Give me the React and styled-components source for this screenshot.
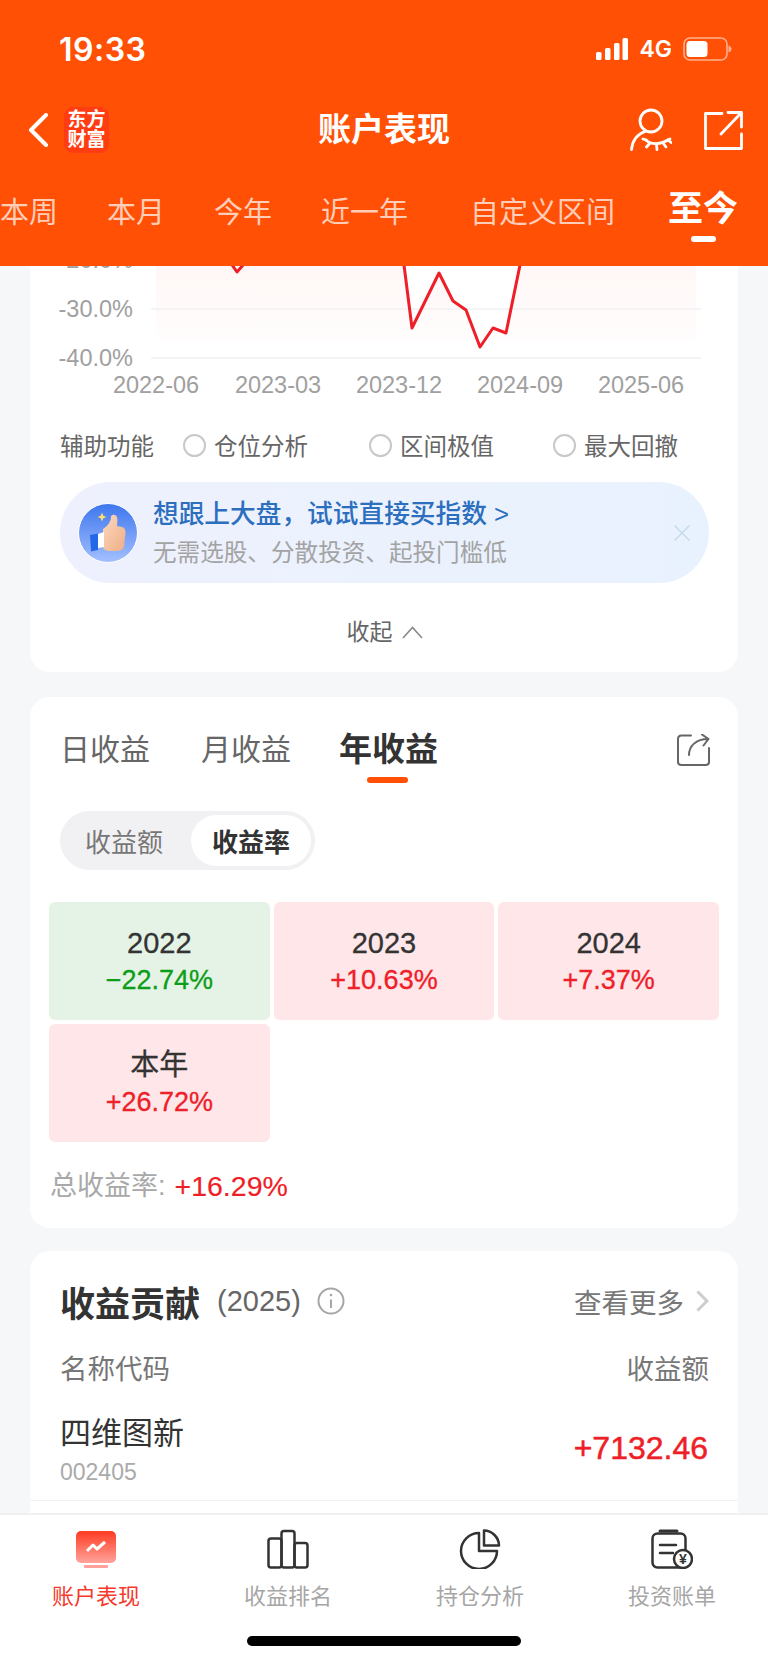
import React from 'react';
import styled, { createGlobalStyle } from 'styled-components';

const FONT = '"Liberation Sans", "Noto Sans CJK SC", sans-serif';

const GlobalStyle = createGlobalStyle`
  html, body {
    margin: 0;
    padding: 0;
    background: #f6f7f9;
    font-family: ${FONT};
  }
  * { box-sizing: border-box; }
`;

const Page = styled.div`
  width: 768px;
  height: 1663px;
  display: flex;
  flex-direction: column;
  overflow: hidden;
  background: #f6f7f9;
`;

/* ---------- orange header ---------- */

const Header = styled.header`
  flex: none;
  height: 266px;
  background: #ff5005;
  color: #fff;
  display: flex;
  flex-direction: column;
`;

const StatusBar = styled.div`
  height: 98px;
  padding: 0 36px 0 59px;
  display: flex;
  align-items: center;
  justify-content: space-between;
`;

const Clock = styled.span`
  font-family: Inter, ${FONT};
  font-weight: 600;
  font-size: 32px;
  letter-spacing: .5px;
`;

const StatusRight = styled.div`
  display: flex;
  align-items: center;
`;

const NetworkLabel = styled.span`
  font-family: Inter, ${FONT};
  font-weight: 600;
  font-size: 23px;
  margin: 0 11px 0 11px;
`;

const NavBar = styled.div`
  height: 64px;
  padding: 0 25px 0 28px;
  display: flex;
  align-items: center;
  justify-content: space-between;
  position: relative;
`;

const NavLeft = styled.div`
  display: flex;
  align-items: center;
  gap: 16px;
`;

const BrandBadge = styled.div`
  width: 45px;
  height: 46px;
  border-radius: 9px;
  background: #ff3c12;
  display: flex;
  align-items: center;
  justify-content: center;
  text-align: center;
  font-size: 19px;
  line-height: 20px;
  font-weight: 700;
`;

const NavTitle = styled.h1`
  position: absolute;
  left: 0;
  right: 0;
  top: 0;
  margin: 0;
  line-height: 64px;
  font-size: 33px;
  font-weight: 700;
  text-align: center;
  pointer-events: none;
`;

const NavRight = styled.div`
  display: flex;
  align-items: center;
  gap: 32px;
`;

const PeriodTabs = styled.nav`
  flex: 1;
  display: flex;
  align-items: flex-start;
  gap: 49px;
  white-space: nowrap;
`;

const PeriodTab = styled.span`
  position: relative;
  margin-left: ${p => p.$offset || 0}px;
  font-size: ${p => (p.$active ? 35 : 29)}px;
  font-weight: ${p => (p.$active ? 700 : 400)};
  line-height: 40px;
  margin-top: ${p => (p.$active ? 27 : 31)}px;
  color: ${p => (p.$active ? '#fff' : 'rgba(255,255,255,.72)')};

  ${p => p.$active && `
    &::after {
      content: '';
      position: absolute;
      left: 23px;
      bottom: -13px;
      width: 25px;
      height: 6px;
      border-radius: 3px;
      background: #fff;
    }
  `}
`;

/* ---------- scrolling body ---------- */

const Body = styled.main`
  flex: 1;
  min-height: 0;
  overflow: hidden;
  padding: 0 30px;
  display: flex;
  flex-direction: column;
  gap: 25px;
`;

const Card = styled.section`
  flex: none;
  background: #fff;
  border-radius: ${p => (p.$openTop ? '0 0 20px 20px' : '20px')};
  padding: ${p => p.$pad || '0 29px 0 30px'};
  margin-top: ${p => p.$shift || 0}px;
`;

const ChartSvg = styled.svg`
  display: block;
  margin: 0 -29px 0 -30px;
`;

const AssistRow = styled.div`
  margin-top: 30px;
  height: 30px;
  display: flex;
  align-items: center;
  font-size: 23.5px;
  color: #666;
`;

const AssistOption = styled.label`
  display: flex;
  align-items: center;
  gap: 8px;
  margin-left: ${p => p.$gap}px;
`;

const Radio = styled.span`
  width: 23px;
  height: 23px;
  border-radius: 50%;
  border: 2px solid #c8c8c8;
`;

const Banner = styled.div`
  margin-top: 22px;
  height: 101px;
  border-radius: 51px;
  padding: 0 19px 0 18px;
  background: linear-gradient(90deg, #eef1fd 0%, #e8f2fe 100%);
  display: flex;
  align-items: center;
  gap: 15px;
`;

const BannerText = styled.div`
  flex: 1;
  display: flex;
  flex-direction: column;
  gap: 4px;
`;

const BannerTitle = styled.div`
  font-size: 25.7px;
  line-height: 36px;
  font-weight: 500;
  color: #2c6fbf;
`;

const BannerSub = styled.div`
  font-size: 23.6px;
  line-height: 34px;
  color: #a3a3a3;
`;

const CollapseRow = styled.div`
  margin-top: 34px;
  padding-bottom: 25px;
  display: flex;
  justify-content: center;
  align-items: center;
  gap: 9px;
  font-size: 23px;
  line-height: 30px;
  color: #666;
`;

const EarningTabs = styled.div`
  height: 44px;
  display: flex;
  align-items: center;
  gap: 51px;
`;

const EarningTab = styled.span`
  position: relative;
  font-size: ${p => (p.$active ? 33 : 30)}px;
  line-height: 44px;
  font-weight: ${p => (p.$active ? 700 : 400)};
  color: ${p => (p.$active ? '#333' : '#666')};
  margin-left: ${p => (p.$active ? -3 : 0)}px;

  ${p => p.$active && `
    &::after {
      content: '';
      position: absolute;
      left: 28px;
      bottom: -11px;
      width: 41px;
      height: 6px;
      border-radius: 3px;
      background: #ff5005;
    }
  `}
`;

const ShareButton = styled.svg`
  margin-left: auto;
  margin-right: -1px;
`;

const Segment = styled.div`
  margin-top: 39px;
  width: 255px;
  height: 59px;
  padding: 4px;
  border-radius: 30px;
  background: #f1f1f4;
  display: flex;
`;

const SegmentItem = styled.div`
  width: ${p => (p.$active ? 120 : 127)}px;
  padding-right: ${p => (p.$active ? 0 : 7)}px;
  border-radius: 26px;
  background: ${p => (p.$active ? '#fff' : 'transparent')};
  display: flex;
  align-items: center;
  justify-content: center;
  font-size: 26px;
  font-weight: ${p => (p.$active ? 700 : 400)};
  color: ${p => (p.$active ? '#333' : '#777')};
`;

const YearGrid = styled.div`
  margin: 32px -10px 0 -11px;
  display: grid;
  grid-template-columns: repeat(3, 1fr);
  gap: 4px;
`;

const YearCell = styled.div`
  height: 118px;
  border-radius: 6px;
  background: ${p => (p.$down ? '#e5f3e6' : '#ffe6e8')};
  display: flex;
  flex-direction: column;
  align-items: center;
  justify-content: center;
  gap: 4px;
`;

const YearLabel = styled.div`
  font-size: 29px;
  line-height: 34px;
  color: #333;
  -webkit-text-stroke: .3px #333;
`;

const YearValue = styled.div`
  font-size: 27px;
  line-height: 32px;
  color: ${p => (p.$down ? '#0c9e18' : '#ee2029')};
  -webkit-text-stroke: .3px ${p => (p.$down ? '#0c9e18' : '#ee2029')};
`;

const TotalRow = styled.div`
  margin: 26px 0 0 -10px;
  padding-bottom: 24px;
  line-height: 36px;
  font-size: 27px;
  color: #a8a8a8;
  display: flex;
  gap: 9px;
`;

const RedValue = styled.span`
  font-size: ${p => p.$size || 28.5}px;
  color: #ee1f28;
  -webkit-text-stroke: ${p => (p.$strong ? '.5px' : '.2px')} #ee1f28;
  margin: ${p => (p.$strong ? '0 1px 4px 0' : '0')};
`;

const ContributionHead = styled.div`
  height: 44px;
  display: flex;
  align-items: center;
`;

const ContributionTitle = styled.h2`
  margin: 0;
  font-size: 35px;
  font-weight: 700;
  color: #333;
`;

const ContributionYear = styled.span`
  margin: 0 16px 0 17px;
  font-size: 29px;
  color: #666;
`;

const MoreLink = styled.span`
  margin-left: auto;
  display: flex;
  align-items: center;
  gap: 12px;
  font-size: 27.5px;
  color: #777;
`;

const ColumnHead = styled.div`
  margin-top: 30px;
  display: flex;
  justify-content: space-between;
  line-height: 34px;
  font-size: 27.5px;
  color: #777;
`;

const StockRow = styled.div`
  margin: 27px -29px 0 -30px;
  padding: 0 29px 13px 30px;
  display: flex;
  justify-content: space-between;
  align-items: center;
  border-bottom: 1px solid #f2f2f2;
`;

const StockName = styled.div`
  font-size: 31px;
  line-height: 40px;
  color: #333;
`;

const StockCode = styled.div`
  margin-top: 3px;
  font-size: 23px;
  line-height: 30px;
  color: #aaa;
`;

/* ---------- bottom tab bar ---------- */

const TabBar = styled.footer`
  flex: none;
  position: relative;
  height: 150px;
  background: #fff;
  border-top: 2px solid #f0f0f2;
`;

const TabItems = styled.div`
  padding-top: 14px;
  display: grid;
  grid-template-columns: repeat(4, 192px);
`;

const TabItem = styled.div`
  display: flex;
  flex-direction: column;
  align-items: center;
  font-size: 22px;
  line-height: 30px;
  color: ${p => (p.$active ? '#f5392b' : '#a6a6a6')};
`;

const TabIcon = styled.svg`
  display: block;
  margin-bottom: 13px;
`;

const HomeIndicator = styled.div`
  position: absolute;
  left: 247px;
  bottom: 17px;
  width: 274px;
  height: 10px;
  border-radius: 5px;
  background: #000;
`;

/* ---------- drawings ---------- */

const SignalIcon = () => (
  <svg width="32" height="22" viewBox="0 0 32 22" fill="#fff">
    <rect x="0" y="14" width="5.5" height="8" rx="1.5" />
    <rect x="9" y="10" width="5.5" height="12" rx="1.5" />
    <rect x="18" y="5" width="5.5" height="17" rx="1.5" />
    <rect x="26.5" y="0" width="5.5" height="22" rx="1.5" />
  </svg>
);

const BatteryIcon = () => (
  <svg width="49" height="24" viewBox="0 0 49 24">
    <rect x="1" y="1" width="43" height="22" rx="6" fill="none" stroke="#fff" strokeOpacity=".55" strokeWidth="1.6" />
    <rect x="3.5" y="4" width="21" height="16" rx="3.5" fill="#fff" />
    <path d="M45.5 8.5c2 .6 3 2 3 3.5s-1 2.9-3 3.5z" fill="#fff" fillOpacity=".55" />
  </svg>
);

const BackIcon = () => (
  <svg width="20" height="34" viewBox="0 0 20 34" fill="none" stroke="#fff" strokeWidth="4" strokeLinecap="round" strokeLinejoin="round">
    <path d="M18 2 3 17l15 15" />
  </svg>
);

const EyeUserIcon = () => (
  <svg width="42" height="44" viewBox="0 0 42 44" fill="none" stroke="#fff" strokeWidth="2.8" strokeLinecap="round">
    <circle cx="21" cy="13" r="11" />
    <path d="M15 23.5C8 26 2.5 32 1.5 41.5" />
    <path d="M16 32c5 5 14 5 24-1" />
    <path d="M20 35l-3.5 4M26.5 36.5l.5 5M33 35l3 4M38 32l3 2.5M16 32l-3-1" />
  </svg>
);

const ExportIcon = () => (
  <svg width="39" height="39" viewBox="0 0 39 39" fill="none" stroke="#fff" strokeWidth="2.8" strokeLinecap="round" strokeLinejoin="round">
    <path d="M18 2.5H1.5v35h36V23" />
    <path d="M17 23 37.5 1.5M24 1.5h13.5V16" />
  </svg>
);

const gridLines = [309, 358];
const yLabels = [['-20.0%', 260], ['-30.0%', 309], ['-40.0%', 358]];
const xLabels = [['2022-06', 156], ['2023-03', 278], ['2023-12', 399], ['2024-09', 520], ['2025-06', 641]];
const curveA = '222,240 230,262 237,272 244,264 252,240';
const curveB = '400,240 404,265 412,328 439,273 453,301 466,310 480,347 493,328 506,333 520,265 524,240';

const PerformanceChart = () => (
  <ChartSvg width="708" height="134" viewBox="30 266 708 134">
    <defs>
      <linearGradient id="chartBand" x1="0" y1="0" x2="0" y2="1">
        <stop offset="0" stopColor="#fff7f6" />
        <stop offset="1" stopColor="#fffdfd" />
      </linearGradient>
    </defs>
    <rect x="156" y="266" width="540" height="74" fill="url(#chartBand)" />
    <path d="M404 266 412 328 439 273 453 301 466 310 480 347 493 328 506 333 520 266Z" fill="#fff" />
    {gridLines.map(y => (
      <line key={y} x1="151" x2="701" y1={y} y2={y} stroke="#f0f0f5" strokeWidth="1.5" />
    ))}
    <g fontFamily="Liberation Sans" fontSize="23.5" fill="#a0a0a0">
      {yLabels.map(([text, y]) => (
        <text key={text} x="133" y={y + 8} textAnchor="end">{text}</text>
      ))}
      {xLabels.map(([text, x]) => (
        <text key={text} x={x} y="393" textAnchor="middle">{text}</text>
      ))}
    </g>
    <g fill="none" stroke="#ee1f28" strokeWidth="3" strokeLinejoin="round">
      <polyline points={curveA} />
      <polyline points={curveB} />
    </g>
  </ChartSvg>
);

const ThumbAvatar = () => (
  <svg width="60" height="60" viewBox="0 0 60 60" style={{ flex: 'none' }}>
    <defs>
      <linearGradient id="thumbBg" x1="0" y1="0" x2="0" y2="1">
        <stop offset="0" stopColor="#3d76ee" />
        <stop offset="1" stopColor="#a4c0ff" />
      </linearGradient>
      <linearGradient id="thumbSkin" x1="0" y1="0" x2="1" y2="1">
        <stop offset="0" stopColor="#fbd9bf" />
        <stop offset="1" stopColor="#efae86" />
      </linearGradient>
    </defs>
    <circle cx="30" cy="30" r="29.5" fill="url(#thumbBg)" stroke="#fff" strokeWidth="1" />
    <path d="M24 9.5l1.3 3.2 3.2 1.3-3.2 1.3L24 18.5l-1.3-3.2-3.2-1.3 3.2-1.3z" fill="#ffdf6e" />
    <path d="M25 26c5-3 8-8 8-12 0-3 5-3 6 0 1 4 0 7 0 9l5 1c4 1 4 6 3 10l-1 9c-1 4-4 5-8 5h-8c-3-1-5-2-5-4z" fill="url(#thumbSkin)" />
    <path d="M20 31l6-2v15l-6 1z" fill="#fff" />
    <path d="M12 32l8-1.5V47l-7 1.5z" fill="#2468e8" />
  </svg>
);

const CloseIcon = () => (
  <svg width="16" height="16" viewBox="0 0 16 16" fill="none" stroke="#c4d9ea" strokeWidth="1.3" style={{ flex: 'none' }}>
    <path d="M.5.5l15 15M15.5.5l-15 15" />
  </svg>
);

const ChevronUp = () => (
  <svg width="21" height="13" viewBox="0 0 21 13" fill="none" stroke="#888" strokeWidth="1.6">
    <path d="M1 12 10.5 1.5 20 12" />
  </svg>
);

const ShareIcon = () => (
  <ShareButton width="33" height="32" viewBox="0 0 33 32" fill="none" stroke="#666" strokeWidth="2" strokeLinecap="round" strokeLinejoin="round">
    <path d="M14 1.5H4.5Q1 1.5 1 5v23q0 3 3.5 3H28.5q3.5 0 3.5-3V14" />
    <path d="M12 21C12 12 19 5 31 5M25 .5l6.5 4.5-5 6.5" />
  </ShareButton>
);

const InfoIcon = () => (
  <svg width="28" height="28" viewBox="0 0 28 28" fill="none" stroke="#a6a6a6" strokeWidth="2">
    <circle cx="14" cy="14" r="12.5" />
    <path d="M14 12.5V21" />
    <circle cx="14" cy="8" r="1.3" fill="#a6a6a6" stroke="none" />
  </svg>
);

const ChevronRight = () => (
  <svg width="13" height="22" viewBox="0 0 13 22" fill="none" stroke="#cdcdcd" strokeWidth="3">
    <path d="M1.5 1.5 11 11l-9.5 9.5" />
  </svg>
);

const AccountTabIcon = () => (
  <TabIcon width="40" height="40" viewBox="0 0 40 40">
    <defs>
      <linearGradient id="accountTab" x1="0" y1="0" x2="0" y2="1">
        <stop offset="0" stopColor="#ff3a22" />
        <stop offset="1" stopColor="#ffa49b" />
      </linearGradient>
    </defs>
    <rect x="0" y="2" width="40" height="32" rx="5" fill="url(#accountTab)" />
    <rect x="8" y="36" width="24" height="3" rx="1" fill="#ffa198" />
    <path d="M11 22l6-6 4 4 8-7" fill="none" stroke="#fff" strokeWidth="3" strokeLinejoin="round" />
  </TabIcon>
);

const RankTabIcon = () => (
  <TabIcon width="42" height="40" viewBox="0 0 42 40" fill="none" stroke="#333" strokeWidth="2.5">
    <rect x="1.5" y="9.5" width="13" height="29" rx="2.5" />
    <rect x="14.5" y="2" width="13" height="36.5" rx="2.5" />
    <rect x="27.5" y="14" width="13" height="24.5" rx="2.5" />
  </TabIcon>
);

const PieTabIcon = () => (
  <TabIcon width="42" height="40" viewBox="0 0 42 40" fill="none" stroke="#333" strokeWidth="2.5" strokeLinejoin="round">
    <path d="M20 4a18 18 0 1 0 18 18H20z" />
    <path d="M25 1.5c8 0 15 7 15 15H25z" />
  </TabIcon>
);

const BillTabIcon = () => (
  <TabIcon width="42" height="40" viewBox="0 0 42 40">
    <path d="M9 2h17" stroke="#333" strokeWidth="3" strokeLinecap="round" />
    <rect x="1.5" y="4.5" width="33" height="34" rx="5" fill="none" stroke="#333" strokeWidth="2.5" />
    <path d="M9 16h16M9 24h13" stroke="#333" strokeWidth="2.5" strokeLinecap="round" />
    <circle cx="32" cy="30" r="9" fill="#fff" stroke="#333" strokeWidth="2.5" />
    <text x="32" y="35" textAnchor="middle" fontFamily="Liberation Sans" fontWeight="700" fontSize="14" fill="#333">¥</text>
  </TabIcon>
);

const years = [
  { label: '2022', value: '−22.74%', down: true },
  { label: '2023', value: '+10.63%' },
  { label: '2024', value: '+7.37%' },
  { label: '本年', value: '+26.72%' },
];

const assistOptions = [
  { label: '仓位分析', gap: 29 },
  { label: '区间极值', gap: 61 },
  { label: '最大回撤', gap: 59 },
];

const tabs = [
  { label: '账户表现', Icon: AccountTabIcon, active: true },
  { label: '收益排名', Icon: RankTabIcon },
  { label: '持仓分析', Icon: PieTabIcon },
  { label: '投资账单', Icon: BillTabIcon },
];

export default function App() {
  return (
    <Page>
      <GlobalStyle />
      <Header>
        <StatusBar>
          <Clock>19:33</Clock>
          <StatusRight>
            <SignalIcon />
            <NetworkLabel>4G</NetworkLabel>
            <BatteryIcon />
          </StatusRight>
        </StatusBar>
        <NavBar>
          <NavLeft>
            <BackIcon />
            <BrandBadge>东方<br />财富</BrandBadge>
          </NavLeft>
          <NavTitle>账户表现</NavTitle>
          <NavRight>
            <EyeUserIcon />
            <ExportIcon />
          </NavRight>
        </NavBar>
        <PeriodTabs>
          <PeriodTab>本周</PeriodTab>
          <PeriodTab>本月</PeriodTab>
          <PeriodTab>今年</PeriodTab>
          <PeriodTab>近一年</PeriodTab>
          <PeriodTab $offset={13}>自定义区间</PeriodTab>
          <PeriodTab $active $offset={4}>至今</PeriodTab>
        </PeriodTabs>
      </Header>

      <Body>
        <Card $openTop>
          <PerformanceChart />
          <AssistRow>
            辅助功能
            {assistOptions.map(o => (
              <AssistOption key={o.label} $gap={o.gap}>
                <Radio />
                {o.label}
              </AssistOption>
            ))}
          </AssistRow>
          <Banner>
            <ThumbAvatar />
            <BannerText>
              <BannerTitle>想跟上大盘，试试直接买指数 &gt;</BannerTitle>
              <BannerSub>无需选股、分散投资、起投门槛低</BannerSub>
            </BannerText>
            <CloseIcon />
          </Banner>
          <CollapseRow>
            收起
            <ChevronUp />
          </CollapseRow>
        </Card>

        <Card $pad="31px 29px 0 30px">
          <EarningTabs>
            <EarningTab>日收益</EarningTab>
            <EarningTab>月收益</EarningTab>
            <EarningTab $active>年收益</EarningTab>
            <ShareIcon />
          </EarningTabs>
          <Segment>
            <SegmentItem>收益额</SegmentItem>
            <SegmentItem $active>收益率</SegmentItem>
          </Segment>
          <YearGrid>
            {years.map(y => (
              <YearCell key={y.label} $down={y.down}>
                <YearLabel>{y.label}</YearLabel>
                <YearValue $down={y.down}>{y.value}</YearValue>
              </YearCell>
            ))}
          </YearGrid>
          <TotalRow>
            总收益率:
            <RedValue>+16.29%</RedValue>
          </TotalRow>
        </Card>

        <Card $pad="28px 29px 40px 30px" $shift={-2}>
          <ContributionHead>
            <ContributionTitle>收益贡献</ContributionTitle>
            <ContributionYear>(2025)</ContributionYear>
            <InfoIcon />
            <MoreLink>
              查看更多
              <ChevronRight />
            </MoreLink>
          </ContributionHead>
          <ColumnHead>
            <span>名称代码</span>
            <span>收益额</span>
          </ColumnHead>
          <StockRow>
            <div>
              <StockName>四维图新</StockName>
              <StockCode>002405</StockCode>
            </div>
            <RedValue $size={32} $strong>+7132.46</RedValue>
          </StockRow>
        </Card>
      </Body>

      <TabBar>
        <TabItems>
          {tabs.map(({ label, Icon, active }) => (
            <TabItem key={label} $active={active}>
              <Icon />
              {label}
            </TabItem>
          ))}
        </TabItems>
        <HomeIndicator />
      </TabBar>
    </Page>
  );
}
